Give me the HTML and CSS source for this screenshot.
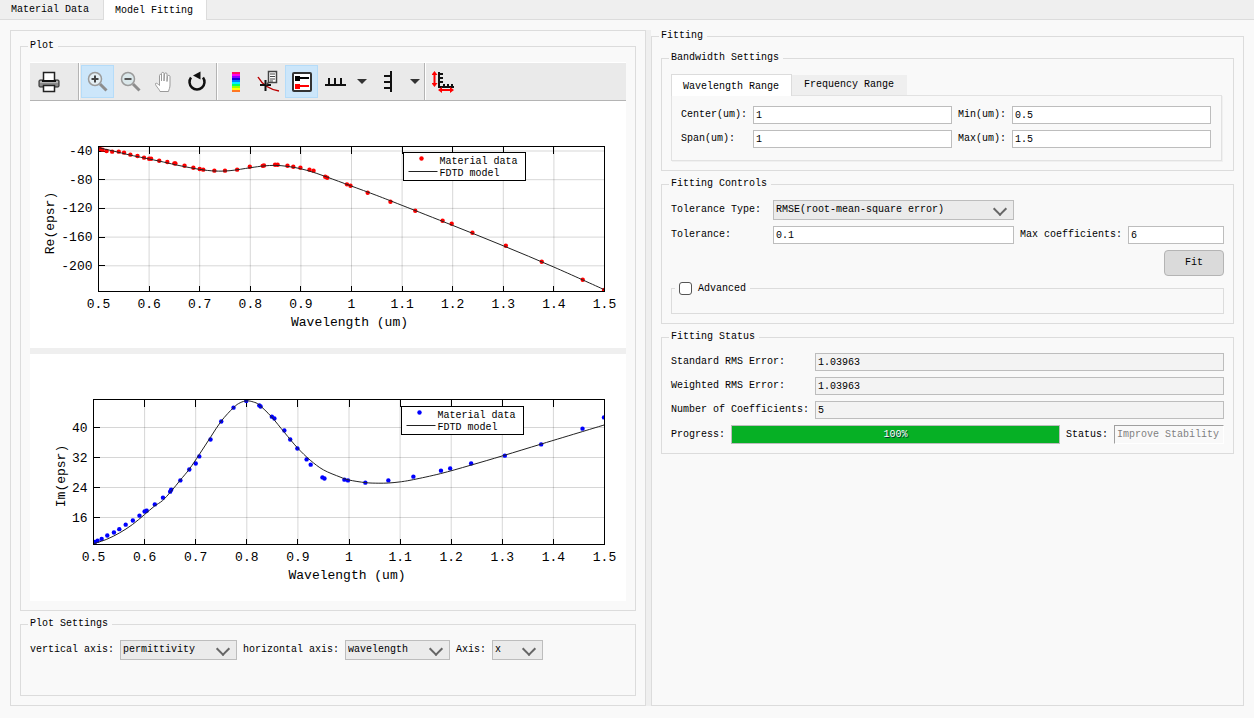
FILE: index.html
```
<!DOCTYPE html>
<html lang="en">
<head>
  <meta charset="utf-8">
  <title>Model Fitting</title>
  <link rel="stylesheet" href="styles.css">
</head>
<body>
  <div class="main-tabs">
    <button class="main-tab" type="button">Material Data</button>
    <button class="main-tab active" type="button">Model Fitting</button>
  </div>

  <div class="content">
    <div class="plot-panel">
      <fieldset class="group">
        <legend>Plot</legend>
        <div class="toolbar">
          <button class="tool" type="button" title="Print">
            <svg viewBox="0 0 24 24">
              <rect x="2" y="10" width="20" height="7" rx="1" fill="#8c8c8c" stroke="#222"/>
              <path d="M3 12h18" stroke="#ddd"/>
              <path d="M6.500 11V2.500h11V11z" fill="#fff" stroke="#222" stroke-width="1.500"/>
              <path d="M5 11h14" stroke="#111" stroke-width="2"/>
              <path d="M6.500 15.500h11v6h-11z" fill="#fff" stroke="#222" stroke-width="1.500"/>
            </svg>
          </button>
          <span class="separator wide"></span>
          <button class="tool checked" type="button" title="Zoom in">
            <svg viewBox="0 0 24 24">
              <path d="M14 14l6.500 6.500" stroke="#8d8d8d" stroke-width="3"/>
              <circle cx="9" cy="9" r="6.500" fill="#e4eff4" stroke="#9b9b9b" stroke-width="1.500"/>
              <path d="M5.500 9h7M9 5.500v7" stroke="#444" stroke-width="2"/>
            </svg>
          </button>
          <button class="tool" type="button" title="Zoom out">
            <svg viewBox="0 0 24 24">
              <path d="M14 14l6.500 6.500" stroke="#8d8d8d" stroke-width="3"/>
              <circle cx="9" cy="9" r="6.500" fill="#dbe8eb" stroke="#9b9b9b" stroke-width="1.500"/>
              <path d="M5.500 9h7" stroke="#555" stroke-width="2"/>
            </svg>
          </button>
          <button class="tool" type="button" title="Pan">
            <svg viewBox="0 0 24 24">
              <path d="M8 21.500c-1-3-5-6-4.500-8 1-1 3 1 4 2V5.500c0-1.500 2-1.500 2 0V11 3.500c0-1.500 2.500-1.500 2.500 0V11l.5-7c0-1.500 2.500-1.500 2.500 0v7.500l.5-5c0-1.500 2.500-1.500 2.500 0V15c0 3-1 4-1.500 6.500z" fill="#fff" stroke="#9a9a9a"/>
            </svg>
          </button>
          <button class="tool" type="button" title="Reset view">
            <svg viewBox="0 0 24 24">
              <path d="M6 7.500A7.500 7.500 0 1 0 18 7.500" fill="none" stroke="#111" stroke-width="2.500"/>
              <path d="M8 5.500l7.500-4v8z" fill="#111"/>
            </svg>
          </button>
          <span class="separator"></span>
          <button class="tool" type="button" title="Colorbar">
            <svg viewBox="0 0 24 24" shape-rendering="crispEdges">
              <path d="M8 2h8v2H8z" fill="#ff1060"/>
              <path d="M8 4h8v2H8z" fill="#f0e"/>
              <path d="M8 6h8v2H8z" fill="#80f"/>
              <path d="M8 8h8v2H8z" fill="#10d"/>
              <path d="M8 10h8v2H8z" fill="#07f"/>
              <path d="M8 12h8v2H8z" fill="#0ef"/>
              <path d="M8 14h8v2H8z" fill="#0f6"/>
              <path d="M8 16h8v2H8z" fill="#9f0"/>
              <path d="M8 18h8v2H8z" fill="#ff0"/>
              <path d="M8 20h8v2H8z" fill="#f72"/>
            </svg>
          </button>
          <button class="tool" type="button" title="Data cursor">
            <svg viewBox="0 0 24 24">
              <path d="M1 7c4 7 10 12 21 14" fill="none" stroke="#b00" stroke-width="1.500"/>
              <path d="M3 15h11M8.500 10v11" stroke="#111" stroke-width="2"/>
              <path d="M9 15l4-4" stroke="#444" stroke-width="1.500"/>
              <path d="M11.500 1.500h8v11h-8z" fill="#fff" stroke="#444" stroke-width="1.500"/>
              <path d="M13 4h5M13 6.500h5M13 9h5M13 11h3" stroke="#444"/>
            </svg>
          </button>
          <button class="tool checked" type="button" title="Legend">
            <svg viewBox="0 0 24 24">
              <rect x="3" y="3" width="18" height="18" rx="1" fill="#fff" stroke="#333" stroke-width="2"/>
              <path d="M5 6h5v5H5zM10 7h9v2h-9z" fill="#000"/>
              <path d="M5 14h5v5H5zM10 15h9v2h-9z" fill="red"/>
            </svg>
          </button>
          <button class="tool" type="button" title="X ticks">
            <svg viewBox="0 0 24 24" shape-rendering="crispEdges">
              <path d="M2 15h21M6 8v6M12 8v6M18 8v6" stroke="#111" stroke-width="2"/>
            </svg>
          </button>
          <button class="drop" type="button" title="X tick options"></button>
          <button class="tool" type="button" title="Y ticks">
            <svg viewBox="0 0 24 24" shape-rendering="crispEdges">
              <path d="M15 1v21M8 6h6M8 12h6M8 18h6" stroke="#111" stroke-width="2"/>
            </svg>
          </button>
          <button class="drop" type="button" title="Y tick options"></button>
          <span class="separator close"></span>
          <button class="tool" type="button" title="Axis limits">
            <svg viewBox="0 0 24 24">
              <path d="M7 2v15h15" fill="none" stroke="#111" stroke-width="2"/>
              <path d="M8 4h3M8 8h3M8 12h3M12 16v-2M16 16v-2M20 16v-2" stroke="#111" stroke-width="2"/>
              <path d="M2.500 4v10M10 20h8" stroke="red" stroke-width="2"/>
              <path d="M2.500 1l3 4h-6zM2.500 17l3-4h-6zM6 20l4-3v6zM22 20l-4-3v6z" fill="red"/>
            </svg>
          </button>
        </div>
        <svg class="plot" id="rePlot" viewBox="0 0 596 247" role="img" aria-label="Real permittivity plot"></svg>
        <div class="splitter-row"></div>
        <svg class="plot" id="imPlot" viewBox="0 0 596 247" role="img" aria-label="Imaginary permittivity plot"></svg>
      </fieldset>

      <fieldset class="group plot-settings">
        <legend>Plot Settings</legend>
        <div class="settings-row">
          <label for="verticalAxis">vertical axis:</label>
          <div class="select">
            <select id="verticalAxis" class="vertical-axis">
              <option>permittivity</option>
              <option>index</option>
            </select>
          </div>
          <label for="horizontalAxis">horizontal axis:</label>
          <div class="select">
            <select id="horizontalAxis" class="horizontal-axis">
              <option>wavelength</option>
              <option>frequency</option>
            </select>
          </div>
          <label for="axis">Axis:</label>
          <div class="select">
            <select id="axis" class="axis">
              <option>x</option>
              <option>y</option>
              <option>z</option>
            </select>
          </div>
        </div>
      </fieldset>
    </div>

    <div class="splitter-column"></div>

    <fieldset class="group fitting">
      <legend>Fitting</legend>

      <fieldset class="group">
        <legend>Bandwidth Settings</legend>
        <div class="range-tabs">
          <button class="range-tab active" type="button">Wavelength Range</button>
          <button class="range-tab" type="button">Frequency Range</button>
        </div>
        <div class="range-pane">
          <label for="center">Center(um):</label>
          <input id="center" type="text" value="1">
          <label for="min">Min(um):</label>
          <input id="min" type="text" value="0.5">
          <label for="span">Span(um):</label>
          <input id="span" type="text" value="1">
          <label for="max">Max(um):</label>
          <input id="max" type="text" value="1.5">
        </div>
      </fieldset>

      <fieldset class="group">
        <legend>Fitting Controls</legend>
        <div class="controls-grid">
          <label for="toleranceType">Tolerance Type:</label>
          <div class="select">
            <select id="toleranceType">
              <option>RMSE(root-mean-square error)</option>
            </select>
          </div>
          <label class="new-row" for="tolerance">Tolerance:</label>
          <input id="tolerance" type="text" value="0.1">
          <label for="maxCoefficients">Max coefficients:</label>
          <input id="maxCoefficients" type="text" value="6">
        </div>
        <div class="fit-row">
          <button class="fit-button" type="button">Fit</button>
        </div>
        <fieldset class="advanced">
          <legend><input id="advanced" type="checkbox"><label for="advanced">Advanced</label></legend>
        </fieldset>
      </fieldset>

      <fieldset class="group">
        <legend>Fitting Status</legend>
        <div class="status-grid">
          <label for="standardError">Standard RMS Error:</label>
          <input id="standardError" type="text" value="1.03963" readonly>
          <label for="weightedError">Weighted RMS Error:</label>
          <input id="weightedError" type="text" value="1.03963" readonly>
          <label for="coefficients">Number of Coefficients:</label>
          <input id="coefficients" type="text" value="5" readonly>
        </div>
        <div class="progress-row">
          <label for="progress">Progress:</label>
          <div class="progress">
            <progress id="progress" value="100" max="100"></progress>
            <span class="progress-text">100%</span>
          </div>
          <label for="status">Status:</label>
          <input id="status" class="status" type="text" value="Improve Stability" disabled>
        </div>
      </fieldset>
    </fieldset>
  </div>

  <script src="plots.js"></script>
</body>
</html>
```
FILE: styles.css
```
* {
  box-sizing: border-box;
}

body {
  display: flex;
  flex-direction: column;
  min-height: 100vh;
  margin: 0;
  background-color: #f9f9f9;
  color: #000;
  font-family: "Liberation Mono", monospace;
  font-size: 10px;
  line-height: 12px;
}

button,
input,
select {
  margin: 0;
  font: inherit;
  color: inherit;
}

label {
  white-space: nowrap;
}

/* Main tabs */
.main-tabs {
  display: flex;
  height: 20px;
  background-color: #efefef;
  border-bottom: 1px solid #dcdcdc;
}

.main-tab {
  padding: 0 14px 0 11px;
  border: none;
  border-right: 1px solid #dcdcdc;
  background-color: #efefef;
}

.main-tab.active {
  height: 20px;
  padding: 2px 13px 0 11px;
  background-color: #fff;
}

/* Panels */
.content {
  display: grid;
  grid-template-columns: 636fr 5px 593fr;
  flex-grow: 1;
  padding: 10px 10px 12px;
}

.plot-panel {
  display: flex;
  flex-direction: column;
  gap: 7px;
  padding: 9px;
  border: 1px solid #dcdcdc;
}

.splitter-column {
  background-color: #efefef;
}

.group {
  min-width: 0;
  margin: 0;
  padding: 10px 9px 9px;
  border: 1px solid #dcdcdc;
}

.group > legend {
  margin-left: -2px;
  padding: 0 4px 0 2px;
}

.fitting > .group + .group {
  margin-top: 7px;
}

.plot-settings {
  flex-grow: 1;
}

/* Toolbar */
.toolbar {
  display: flex;
  align-items: center;
  height: 39px;
  padding-left: 2px;
  border-top: 1px solid #fff;
  border-bottom: 1px solid #b4b4b4;
  background-color: #eaeaea;
}

.tool {
  flex: none;
  width: 33px;
  height: 33px;
  padding: 0;
  border: 1px solid transparent;
  background: none;
}

.tool svg {
  display: block;
  width: 24px;
  height: 24px;
  margin: 0 auto;
}

.tool.checked {
  border-color: #b5dcf9;
  background-color: #cce6fa;
}

.separator {
  align-self: stretch;
  width: 2px;
  margin: 0 1px 0 3px;
  border-left: 1px solid #b4b4b4;
  background-color: #fff;
}

.separator.wide {
  margin-left: 13px;
}

.separator.close {
  margin-left: 0;
}

.drop {
  flex: none;
  width: 20px;
  height: 33px;
  padding: 0 4px 0 6px;
  border: none;
  background: none;
}

.drop::after {
  content: "";
  display: block;
  border: 5px solid transparent;
  border-top-color: #333;
  border-bottom: none;
}

/* Plots */
.plot {
  display: block;
  width: 100%;
  background-color: #fff;
}

.plot text {
  font-size: 13px;
}

.plot .legend-text {
  font-size: 10px;
}

.splitter-row {
  height: 6px;
  background-color: #efefef;
}

.grid-line {
  stroke: #000;
  stroke-opacity: 0.16;
}

.frame,
.tick {
  fill: none;
  stroke: #000;
  shape-rendering: crispEdges;
}

.curve {
  fill: none;
  stroke: #222;
}

.legend-box {
  fill: #fff;
  stroke: #000;
}

.middle {
  text-anchor: middle;
}

.end {
  text-anchor: end;
}

/* Form controls */
input[type="text"] {
  width: 100%;
  min-width: 0;
  height: 18px;
  padding: 0 2px;
  border: 1px solid #bdbdbd;
  background-color: #fff;
}

input[type="text"]:read-only {
  background-color: #f3f3f3;
}

.select {
  position: relative;
}

select {
  display: block;
  width: 100%;
  height: 20px;
  padding: 0 24px 0 2px;
  border: 1px solid #bdbdbd;
  border-radius: 0;
  background-color: #ebebeb;
  appearance: none;
}

.select::after {
  content: "";
  position: absolute;
  top: 4px;
  right: 9px;
  width: 8px;
  height: 8px;
  border: solid #666;
  border-width: 0 2px 2px 0;
  transform: rotate(45deg);
  pointer-events: none;
}

.settings-row {
  display: flex;
  align-items: center;
  gap: 6px;
}

.vertical-axis {
  width: 117px;
}

.horizontal-axis {
  width: 105px;
}

.axis {
  width: 51px;
}

/* Bandwidth settings */
.range-tabs {
  display: flex;
  align-items: flex-end;
  height: 21px;
}

.range-tab {
  height: 20px;
  padding: 0 13px 0 12px;
  border: none;
  background-color: #efefef;
}

.range-tab.active {
  position: relative;
  height: 22px;
  margin-bottom: -1px;
  padding: 2px 12px 0 11px;
  border: 1px solid #dcdcdc;
  border-bottom: none;
  background-color: #fff;
}

.range-pane {
  display: grid;
  grid-template-columns: auto 1fr auto 1fr;
  align-items: center;
  gap: 6px;
  margin-right: 2px;
  padding: 10px 10px 12px 9px;
  border: 1px solid #e2e2e2;
  box-shadow: 1px 1px 0 #f0f0f0;
}

/* Fitting controls */
.controls-grid {
  display: grid;
  grid-template-columns: 96px 241fr auto 96fr;
  align-items: center;
  gap: 6px;
}

.new-row {
  grid-column: 1;
}

.fit-row {
  display: flex;
  justify-content: flex-end;
  margin: 6px 0;
}

.fit-button {
  width: 60px;
  height: 26px;
  border: 1px solid #b4b4b4;
  border-radius: 4px;
  background-color: #dadada;
}

.advanced {
  min-width: 0;
  height: 32px;
  margin: 0;
  padding: 0 3px;
  border: 1px solid #dcdcdc;
}

.advanced legend {
  display: flex;
  align-items: center;
  gap: 6px;
  padding: 0 4px;
}

.advanced input {
  width: 13px;
  height: 13px;
  margin: 0;
  border: 1px solid #555;
  border-radius: 3px;
  background-color: #fff;
  appearance: none;
}

.advanced input:checked {
  background-color: #555;
}

/* Fitting status */
.status-grid {
  display: grid;
  grid-template-columns: auto 1fr;
  align-items: center;
  gap: 6px;
}

.progress-row {
  display: flex;
  align-items: center;
  gap: 6px;
  margin-top: 6px;
}

.progress {
  position: relative;
  flex-grow: 1;
  height: 19px;
}

progress {
  display: block;
  width: 100%;
  height: 19px;
  border: 1px solid #bdbdbd;
  background-color: #e6e6e6;
  appearance: none;
}

progress::-webkit-progress-bar {
  background-color: #e6e6e6;
}

progress::-webkit-progress-value {
  background-color: #06b025;
}

.progress-text {
  position: absolute;
  inset: 4px 0;
  color: #fff;
  text-align: center;
  text-shadow: 1px 1px 0 #033;
}

.progress-row input.status:disabled {
  width: 110px;
  height: 19px;
  border-color: #a0a0a0 #fff #fff #a0a0a0;
  background-color: #f9f9f9;
  color: #808080;
}
```
FILE: plots.js
```
// wavelength (um), Re(epsr), Im(epsr)
var materialData = [
  [0.503, -37.2, 9.5], [0.508, -38.1, 9.8], [0.516, -40, 10.3], [0.527, -40.9, 11.2],
  [0.540, -40.9, 12], [0.5505, -42.3, 12.9], [0.563, -45.1, 14.1], [0.577, -47, 15.2],
  [0.590, -49.3, 16.5], [0.600, -50.7, 17.6], [0.604, -50.7, 17.8], [0.620, -53.5, 19.5],
  [0.636, -55.3, 21.3], [0.650, -57.2, 22.9], [0.652, -57.4, 23.4], [0.670, -60.5, 25.9],
  [0.6875, -63.3, 28.8], [0.700, -65.1, 30.4], [0.707, -66, 32.3], [0.729, -67.4, 36.8],
  [0.750, -67.4, 41.6], [0.774, -66, 45.3], [0.799, -61.9, 47.1], [0.8245, -60.7, 45.9],
  [0.827, -60.3, 45.6], [0.849, -59.1, 42.9], [0.854, -59.1, 42.4], [0.8735, -60.5, 39.2],
  [0.885, -61.9, 36.8], [0.899, -63.3, 34.4], [0.917, -66, 31.5], [0.925, -67.4, 30.1],
  [0.948, -75.8, 26.7], [0.952, -77.2, 26.4], [0.991, -86.5, 26.1], [0.998, -88.4, 25.9],
  [1.032, -98.1, 25.3], [1.077, -110.7, 25.9], [1.126, -123.2, 26.9], [1.180, -137.2, 28.5],
  [1.198, -141.4, 29.1], [1.239, -153.9, 30.4], [1.305, -172.1, 32.5], [1.376, -194.4, 35.5],
  [1.457, -219.5, 39.7], [1.499, -233.8, 42.7]
];

var reModel = [
  [0.5, -35.4], [0.529, -40], [0.562, -45.6], [0.591, -49.8], [0.628, -55.3], [0.661, -60.5],
  [0.7, -65.6], [0.73, -67.9], [0.76, -67.4], [0.8, -63.3], [0.826, -60.9], [0.849, -60],
  [0.873, -61.4], [0.899, -64.6], [0.925, -69.8], [0.953, -76.7], [0.998, -88.4],
  [1.05, -102], [1.1, -115.8], [1.2, -143.7], [1.3, -172.1], [1.4, -201.8], [1.5, -233.4]
];

var imModel = [
  [0.5, 9], [0.526, 10.2], [0.551, 11.9], [0.576, 14.1], [0.6, 16.8], [0.619, 19],
  [0.635, 20.5], [0.652, 23], [0.67, 26], [0.6875, 28.9], [0.707, 32.8], [0.729, 37.4],
  [0.75, 41.7], [0.774, 45.3], [0.787, 46.6], [0.8, 47.1], [0.813, 46.8], [0.8245, 46],
  [0.848, 42.9], [0.8735, 38.7], [0.899, 34.6], [0.924, 31.3], [0.95, 28.7], [0.9825, 26.8],
  [1, 26], [1.032, 25.3], [1.057, 25.15], [1.077, 25.2], [1.1, 25.5], [1.126, 26.1],
  [1.179, 27.7], [1.237, 29.9], [1.302, 32.5], [1.3765, 35.6], [1.4565, 38.9], [1.5, 40.7]
];

// Smooth path through the points
function smoothPath(points) {
  var d = "M" + points[0].join(" ");
  for (var i = 0; i < points.length - 1; i++) {
    var p0 = points[Math.max(i - 1, 0)];
    var p1 = points[i];
    var p2 = points[i + 1];
    var p3 = points[Math.min(i + 2, points.length - 1)];
    d += " C" + [
      p1[0] + (p2[0] - p0[0]) / 6, p1[1] + (p2[1] - p0[1]) / 6,
      p2[0] - (p3[0] - p1[0]) / 6, p2[1] - (p3[1] - p1[1]) / 6,
      p2[0], p2[1]
    ].join(" ");
  }
  return d;
}

function drawPlot(id, o) {
  var right = o.left + o.width;
  var bottom = o.top + 145;
  var x = function (v) { return o.left + (v - 0.5) * o.width; };
  var y = function (v) { return o.tickTop + (o.ticks[0] - v) * o.unit; };
  var out = "";

  out += '<clipPath id="' + id + 'Clip"><rect x="' + o.left + '" y="' + o.top +
    '" width="' + o.width + '" height="145"/></clipPath>';

  for (var i = 0; i <= 10; i++) {
    var tx = x(0.5 + i / 10);
    out += '<path class="grid-line" d="M' + tx + " " + o.top + "V" + bottom + '"/>';
    out += '<path class="tick" d="M' + tx + " " + o.top + "v7M" + tx + " " + bottom + 'v-6"/>';
    out += '<text class="middle" x="' + tx + '" y="' + (bottom + 16) + '">' + (5 + i) / 10 + "</text>";
  }
  o.ticks.forEach(function (v) {
    out += '<path class="grid-line" d="M' + o.left + " " + y(v) + "H" + right + '"/>';
    out += '<path class="tick" d="M' + o.left + " " + y(v) + 'h6"/>';
    out += '<text class="end" x="' + (o.left - 6) + '" y="' + (y(v) + 4) + '">' + v + "</text>";
  });

  out += '<g clip-path="url(#' + id + 'Clip)">';
  materialData.forEach(function (row) {
    out += '<circle cx="' + x(row[0]) + '" cy="' + y(row[o.column]) + '" r="2.2" fill="' + o.color + '"/>';
  });
  out += '<path class="curve" d="' + smoothPath(o.model.map(function (p) {
    return [x(p[0]), y(p[1])];
  })) + '"/></g>';
  out += '<rect class="frame" x="' + o.left + '" y="' + o.top + '" width="' + o.width + '" height="145"/>';

  out += '<text class="middle" x="' + (o.left + o.width / 2 - 2) + '" y="' + (bottom + 34) + '">Wavelength (um)</text>';
  out += '<text class="middle" transform="translate(' + o.labelX + ' 122) rotate(-90)">' + o.label + "</text>";

  out += '<g transform="translate(' + o.legendX + " " + o.legendY + ')">' +
    '<rect class="legend-box" width="122" height="28"/>' +
    '<circle cx="18" cy="6" r="2.2" fill="' + o.color + '"/>' +
    '<path class="curve" d="M5 19h29"/>' +
    '<text class="legend-text" x="36" y="11">Material data</text>' +
    '<text class="legend-text" x="36" y="23">FDTD model</text></g>';

  document.getElementById(id).innerHTML = out;
}

drawPlot("rePlot", {
  left: 68.5, top: 45.5, width: 506, tickTop: 50, unit: 0.7175,
  ticks: [-40, -80, -120, -160, -200], column: 1, model: reModel,
  color: "red", label: "Re(epsr)", labelX: 24, legendX: 373.5, legendY: 51.5
});

drawPlot("imPlot", {
  left: 63.5, top: 45.5, width: 511, tickTop: 73.5, unit: 3.75,
  ticks: [40, 32, 24, 16], column: 2, model: imModel,
  color: "blue", label: "Im(epsr)", labelX: 35, legendX: 371.5, legendY: 52.5
});
```
